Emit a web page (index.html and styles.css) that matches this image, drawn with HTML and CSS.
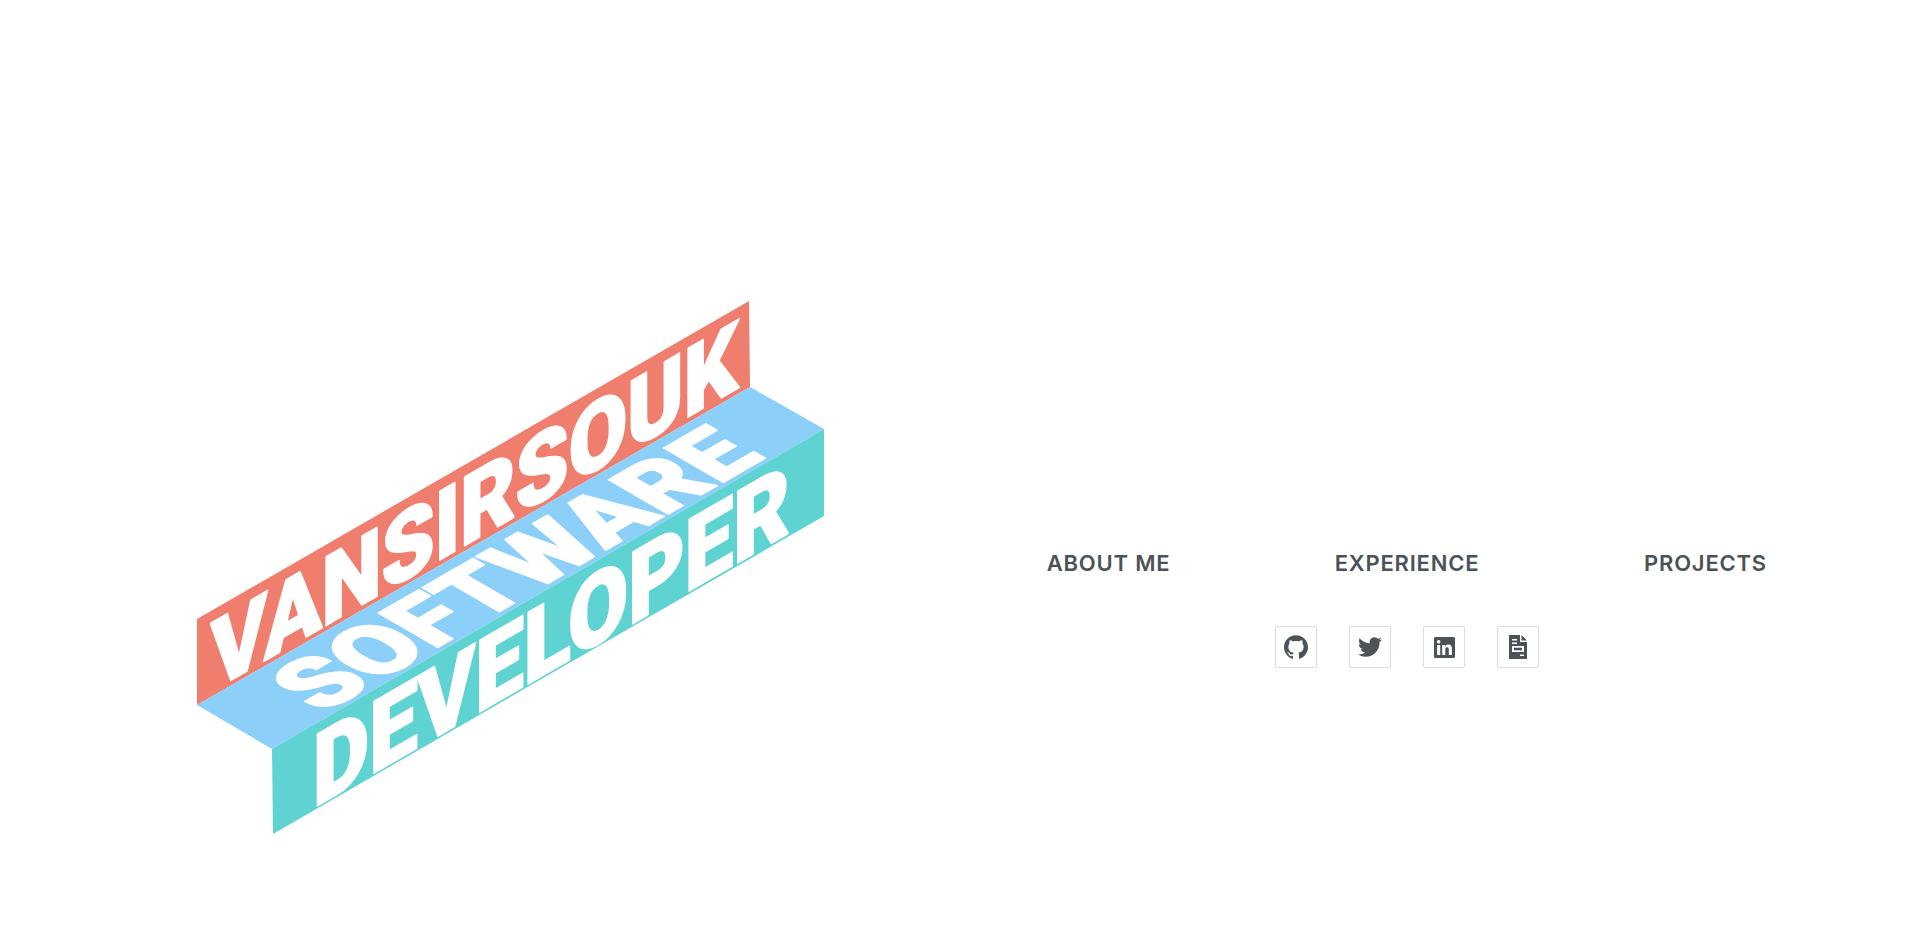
FILE: index.html
```html
<!DOCTYPE html>
<html lang="en">
<head>
<meta charset="utf-8">
<title>Vansirsouk</title>
<link rel="stylesheet" href="styles.css">
</head>
<body>
<main class="page">
  <section class="hero">
    <svg class="logo" viewBox="0 0 959 933" role="img" aria-label="Vansirsouk Software Developer">
      <polygon class="band-red" points="197,619 749,301 750,387 197,705"/>
      <polygon class="band-blue" points="197,705 750,387 824,429 272,749"/>
      <polygon class="band-teal" points="272,749 824,429 824,516 273,834"/>
      <text class="word word-red" transform="matrix(1 -0.576 0 1 0 0)" x="211" y="813" textLength="527" lengthAdjust="spacingAndGlyphs">VANSIRSOUK</text>
      <text class="word word-blue" transform="matrix(1 -0.578 0.866 0.5 322 714)" x="0" y="0" textLength="444" lengthAdjust="spacingAndGlyphs">SOFTWARE</text>
      <text class="word word-teal" transform="matrix(1 -0.578 0 1 0 0)" x="313" y="989" textLength="477" lengthAdjust="spacingAndGlyphs">DEVELOPER</text>
    </svg>
  </section>
  <section class="side">
    <nav class="nav">
      <a class="nav-link" href="#about">ABOUT ME</a>
      <a class="nav-link" href="#experience">EXPERIENCE</a>
      <a class="nav-link" href="#projects">PROJECTS</a>
    </nav>
    <div class="socials">
      <a class="social" href="#github" aria-label="GitHub">
        <svg class="icon" viewBox="0 0 24 24"><path d="M12 .297c-6.63 0-12 5.373-12 12 0 5.303 3.438 9.8 8.205 11.385.6.113.82-.258.82-.577 0-.285-.01-1.04-.015-2.04-3.338.724-4.042-1.61-4.042-1.61C4.422 18.07 3.633 17.7 3.633 17.7c-1.087-.744.084-.729.084-.729 1.205.084 1.838 1.236 1.838 1.236 1.07 1.835 2.809 1.305 3.495.998.108-.776.417-1.305.76-1.605-2.665-.3-5.466-1.332-5.466-5.93 0-1.31.465-2.38 1.235-3.22-.135-.303-.54-1.523.105-3.176 0 0 1.005-.322 3.3 1.23.96-.267 1.98-.399 3-.405 1.02.006 2.04.138 3 .405 2.28-1.552 3.285-1.23 3.285-1.23.645 1.653.24 2.873.12 3.176.765.84 1.23 1.91 1.23 3.22 0 4.61-2.805 5.625-5.475 5.92.42.36.81 1.096.81 2.22 0 1.606-.015 2.896-.015 3.286 0 .315.21.69.825.57C20.565 22.092 24 17.592 24 12.297c0-6.627-5.373-12-12-12"/></svg>
      </a>
      <a class="social" href="#twitter" aria-label="Twitter">
        <svg class="icon" viewBox="0 0 24 24"><path d="M23.953 4.57a10 10 0 01-2.825.775 4.958 4.958 0 002.163-2.723c-.951.555-2.005.959-3.127 1.184a4.92 4.92 0 00-8.384 4.482C7.69 8.095 4.067 6.13 1.64 3.162a4.822 4.822 0 00-.666 2.475c0 1.71.87 3.213 2.188 4.096a4.904 4.904 0 01-2.228-.616v.06a4.923 4.923 0 003.946 4.827 4.996 4.996 0 01-2.212.085 4.936 4.936 0 004.604 3.417 9.867 9.867 0 01-6.102 2.105c-.39 0-.779-.023-1.17-.067a13.995 13.995 0 007.557 2.209c9.053 0 13.998-7.496 13.998-13.985 0-.21 0-.42-.015-.63A9.935 9.935 0 0024 4.59z"/></svg>
      </a>
      <a class="social" href="#linkedin" aria-label="LinkedIn">
        <svg class="icon icon-in" viewBox="0 0 24 24"><path d="M20.447 20.452h-3.554v-5.569c0-1.328-.027-3.037-1.852-3.037-1.853 0-2.136 1.445-2.136 2.939v5.667H9.351V9h3.414v1.561h.046c.477-.9 1.637-1.85 3.37-1.85 3.601 0 4.267 2.37 4.267 5.455v6.286zM5.337 7.433c-1.144 0-2.063-.926-2.063-2.065 0-1.138.92-2.063 2.063-2.063 1.14 0 2.064.925 2.064 2.063 0 1.139-.925 2.065-2.064 2.065zm1.782 13.019H3.555V9h3.564v11.452zM22.225 0H1.771C.792 0 0 .774 0 1.729v20.542C0 23.227.792 24 1.771 24h20.451C23.2 24 24 23.227 24 22.271V1.729C24 .774 23.2 0 22.222 0h.003z"/></svg>
      </a>
      <a class="social" href="#resume" aria-label="Resume">
        <svg class="icon" viewBox="0 0 24 24"><path fill-rule="evenodd" d="M3 0h11v7h7v17H3zM15.500 0 21 5.500h-5.500zM6 4v1.500h5V4zM6 7.500V9h5V7.500zM6 11v6h12v-6zM8 12.800h8v2.400H8zM14 19.500V21h4v-1.500z"/></svg>
      </a>
    </div>
  </section>
</main>
</body>
</html>
```

FILE: styles.css
```css
html, body {
  margin: 0;
  background: #fff;
}
.page {
  display: flex;
  width: 1918px;
  height: 933px;
  overflow: hidden;
}
.hero {
  flex: 0 0 959px;
}
.logo {
  display: block;
  width: 959px;
  height: 933px;
}
.band-red { fill: #f07e6e; }
.band-blue { fill: #8ccff9; }
.band-teal { fill: #5fd3d1; }
.word {
  fill: #fff;
  stroke: #fff;
  stroke-width: 2.2px;
  stroke-linejoin: round;
  font-family: "Roboto", "Liberation Sans", sans-serif;
  font-weight: 900;
}
.word-red { font-size: 96px; }
.word-blue { font-size: 96px; }
.word-teal { font-size: 100px; }
.side {
  flex: 1;
  padding: 548px 63px 0 0;
}
.nav {
  display: grid;
  grid-template-columns: repeat(3, 298.5px);
  justify-content: center;
}
.nav-link {
  text-align: center;
  font-family: "Inter", "Liberation Sans", sans-serif;
  font-weight: 600;
  font-size: 22px;
  letter-spacing: 0.8px;
  line-height: 30px;
  color: #4b5258;
  text-decoration: none;
}
.socials {
  display: flex;
  justify-content: center;
  gap: 32px;
  margin-top: 48px;
}
.social {
  display: flex;
  align-items: center;
  justify-content: center;
  width: 42px;
  height: 42px;
  box-sizing: border-box;
  border: 1px solid #dcdcdc;
  border-radius: 2px;
}
.icon {
  width: 24px;
  height: 24px;
  fill: #4b5258;
}
.icon-in {
  width: 21px;
  height: 21px;
}
```
